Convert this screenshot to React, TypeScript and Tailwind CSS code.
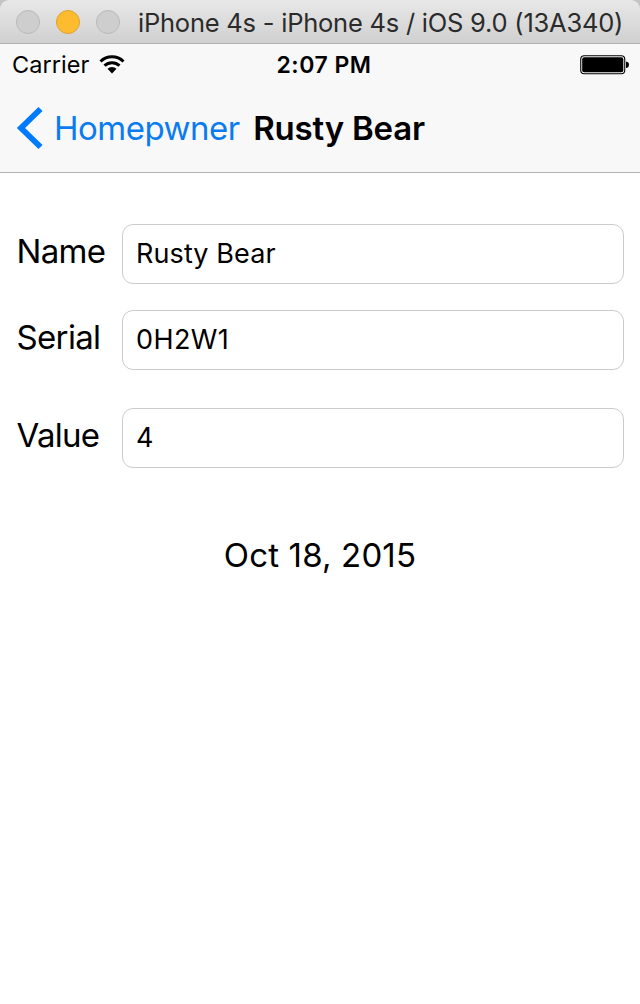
const fields = [
  { label: "Name", value: "Rusty Bear", gap: "mt-0", tracking: "tracking-[-0.7px]", inputTracking: "tracking-[0.1px]" },
  { label: "Serial", value: "0H2W1", gap: "mt-[26px]", tracking: "tracking-[-0.65px]", inputTracking: "tracking-[0.4px]" },
  { label: "Value", value: "4", gap: "mt-[38px]", tracking: "tracking-[-0.7px]", inputTracking: "tracking-normal" },
];

function TitleBar() {
  return (
    <div className="shrink-0 bg-[#c4c4c4]">
      <div className="flex h-[44px] items-center rounded-t-[9px] border-b border-[#b0b0b0] bg-linear-to-b from-[#e8e8e8] to-[#d0d0d0] pl-4">
        <div className="flex gap-4">
          <i className="size-6 rounded-full border border-[#b9b9b9] bg-[#cecece]" />
          <i className="size-6 rounded-full border border-[#e0a12f] bg-[#fdbc2f]" />
          <i className="size-6 rounded-full border border-[#b9b9b9] bg-[#cecece]" />
        </div>
        <span className="ml-[18px] mt-[3px] whitespace-nowrap text-[25.5px] leading-[30px] tracking-[-0.23px] text-[#2b2b2b]">
          iPhone 4s - iPhone 4s / iOS 9.0 (13A340)
        </span>
      </div>
    </div>
  );
}

function StatusBar() {
  return (
    <div className="grid h-[42px] grid-cols-3 items-center pl-[12px] pr-[11px]">
      <div className="flex items-center gap-[10px]">
        <span className="text-[23.5px] tracking-[0.05px]">Carrier</span>
        <svg className="mb-[2px] h-[19px] w-[26px]" viewBox="0 0 26 19" fill="none" stroke="#000" strokeWidth="3">
          <path d="M1.500 6.500a16.500 16.500 0 0 1 23 0M5.500 10.700a11 11 0 0 1 15 0" />
          <path d="M8.500 13.800a6.500 6.500 0 0 1 9 0L13 18.500z" fill="#000" stroke="none" />
        </svg>
      </div>
      <span className="ml-[7px] justify-self-center whitespace-nowrap text-[23px] font-semibold tracking-[0.5px]">2:07 PM</span>
      <svg className="-mr-px mb-px h-5 w-[50px] justify-self-end" viewBox="0 0 50 20">
        <rect x=".75" y=".75" width="44" height="18" rx="3.500" fill="none" stroke="#000" strokeWidth="1.100" />
        <rect x="2.200" y="2.200" width="41.100" height="15.100" rx="2" />
        <path d="M46 6.500q3 .5 3 3.300t-3 3.300z" />
      </svg>
    </div>
  );
}

export default function App() {
  return (
    <div className="flex h-[1004px] w-[640px] flex-col overflow-hidden bg-white font-['Inter',sans-serif] text-black">
      <TitleBar />
      <header className="flex h-[129px] shrink-0 flex-col border-b border-[#b2b2b2] bg-[#f8f8f8]">
        <StatusBar />
        <div className="flex h-[86px] items-center pl-4">
          <svg className="mb-[2px] h-[44px] w-[27px]" viewBox="0 0 27 44" fill="none" stroke="#007aff" strokeWidth="5.800">
            <path d="M24.500 3L5 22l19.500 19" />
          </svg>
          <span className="ml-[11px] text-[33px] tracking-[-0.5px] text-[#0a7cf0]">Homepwner</span>
          <span className="ml-[13.500px] text-[33px] font-semibold tracking-[-0.2px]">Rusty Bear</span>
        </div>
      </header>
      <main className="flex flex-col px-4 pt-[51px]">
        {fields.map((f) => (
          <label key={f.label} className={`flex items-center ${f.gap}`}>
            <span className={`w-[106px] pb-[6px] pl-[0.5px] text-[33px] leading-[40px] ${f.tracking}`}>{f.label}</span>
            <span className="flex h-[60px] flex-1 items-center rounded-[11px] border border-[#cccccc] pl-[13px]">
              <span className={`text-[27px] ${f.inputTracking}`}>{f.value}</span>
            </span>
          </label>
        ))}
        <p className="mt-[67px] text-center text-[33px] leading-[40px] tracking-[0.15px]">Oct 18, 2015</p>
      </main>
    </div>
  );
}
